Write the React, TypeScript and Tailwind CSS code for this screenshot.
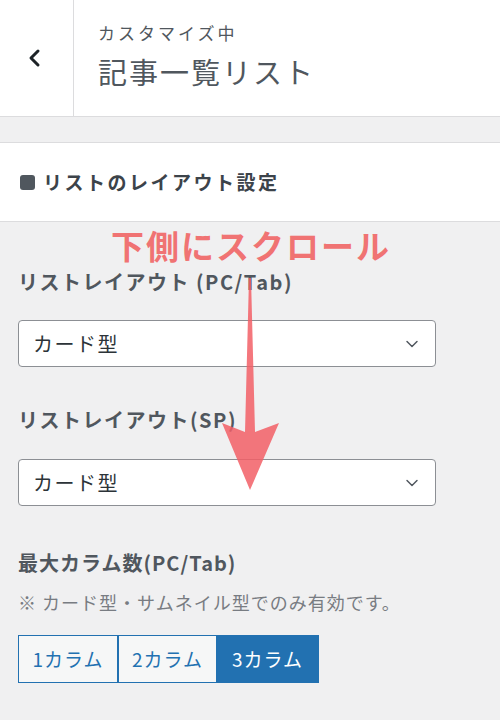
import { ChevronDown } from 'lucide-react'

const FONT = '"Noto Sans CJK JP", "Noto Sans", sans-serif'

function Select({ value }: { value: string }) {
  return (
    <div className="ml-[18px] w-[418px] h-[47px] rounded-[4px] border border-[#8c8f94] bg-white flex items-center justify-between pl-[14px] pr-[13px]">
      <span className="text-[20px] tracking-[1.5px] text-[#2c3338]">{value}</span>
      <ChevronDown className="w-[20px] h-[20px] text-[#50575e]" strokeWidth={1.75} />
    </div>
  )
}

export default function App() {
  const cols = ['1カラム', '2カラム', '3カラム']
  return (
    <div className="relative w-[500px] h-[720px] bg-[#f0f0f1] overflow-hidden" style={{ fontFamily: FONT }}>
      {/* header */}
      <div className="h-[117px] bg-white border-b border-[#dcdcde] flex">
        <div className="w-[74px] border-r border-[#dcdcde] flex items-center justify-center">
          <svg width="14" height="20" viewBox="0 0 14 20" className="mr-[4px]">
            <path d="M10 3 L3 10 L10 17" fill="none" stroke="#1d2327" strokeWidth="3" strokeLinecap="round" strokeLinejoin="round" />
          </svg>
        </div>
        <div className="pl-[24px] pt-[18px] flex flex-col">
          <span className="text-[17px] leading-[30px] tracking-[3px] text-[#50575e]">カスタマイズ中</span>
          <span className="text-[29px] leading-[42px] tracking-[2px] text-[#50575e] mt-[2px]">記事一覧リスト</span>
        </div>
      </div>

      {/* section title */}
      <div className="mt-[25px] h-[80px] bg-white border-y border-[#dcdcde] flex items-center pl-[20px]">
        <span className="w-[15px] h-[15px] rounded-[3px] bg-[#50575e] mr-[8px]" />
        <span className="text-[19px] font-bold tracking-[2.5px] text-[#3c434a]">リストのレイアウト設定</span>
      </div>

      <div className="h-[48px] flex items-center justify-center pl-[2px]">
        <span className="text-[33px] font-bold text-[#f07373] tracking-[2px]">下側にスクロール</span>
      </div>

      <div className="pl-[18px] h-[24px] flex items-center">
        <span className="text-[20px] font-bold tracking-[1.5px] text-[#50575e]">リストレイアウト (PC/Tab)</span>
      </div>
      <div className="mt-[26px]">
        <Select value="カード型" />
      </div>

      <div className="pl-[18px] mt-[41px] h-[24px] flex items-center">
        <span className="text-[20px] font-bold tracking-[1.5px] text-[#50575e]">リストレイアウト(SP)</span>
      </div>
      <div className="mt-[27px]">
        <Select value="カード型" />
      </div>

      <div className="pl-[18px] mt-[45px] h-[24px] flex items-center">
        <span className="text-[20px] font-bold tracking-[1px] text-[#50575e]">最大カラム数(PC/Tab)</span>
      </div>
      <div className="pl-[18px] mt-[15px] h-[24px] flex items-center">
        <span className="text-[18px] tracking-[1px] text-[#787c82]">※ カード型・サムネイル型でのみ有効です。</span>
      </div>

      <div className="ml-[18px] mt-[21px] flex">
        {cols.map((c, i) => (
          <div
            key={c}
            className={`h-[48px] flex items-center justify-center border border-[#2271b1] text-[19px] tracking-[1px] ${
              i === 2 ? 'w-[103px] bg-[#2271b1] text-white' : 'w-[100px] bg-[#f6f7f7] text-[#2271b1]'
            } ${i > 0 ? '-ml-[1px]' : ''} ${i === 1 ? 'border-l-2' : ''}`}
          >
            {c}
          </div>
        ))}
      </div>

      {/* annotation arrow */}
      <svg className="absolute left-0 top-0 pointer-events-none" width="500" height="720">
        <path d="M249 278 L251 278 L255 432 L279 423 L250 490 L222 423 L245 432 Z" fill="#f25f66" fillOpacity="0.85" />
      </svg>
    </div>
  )
}
